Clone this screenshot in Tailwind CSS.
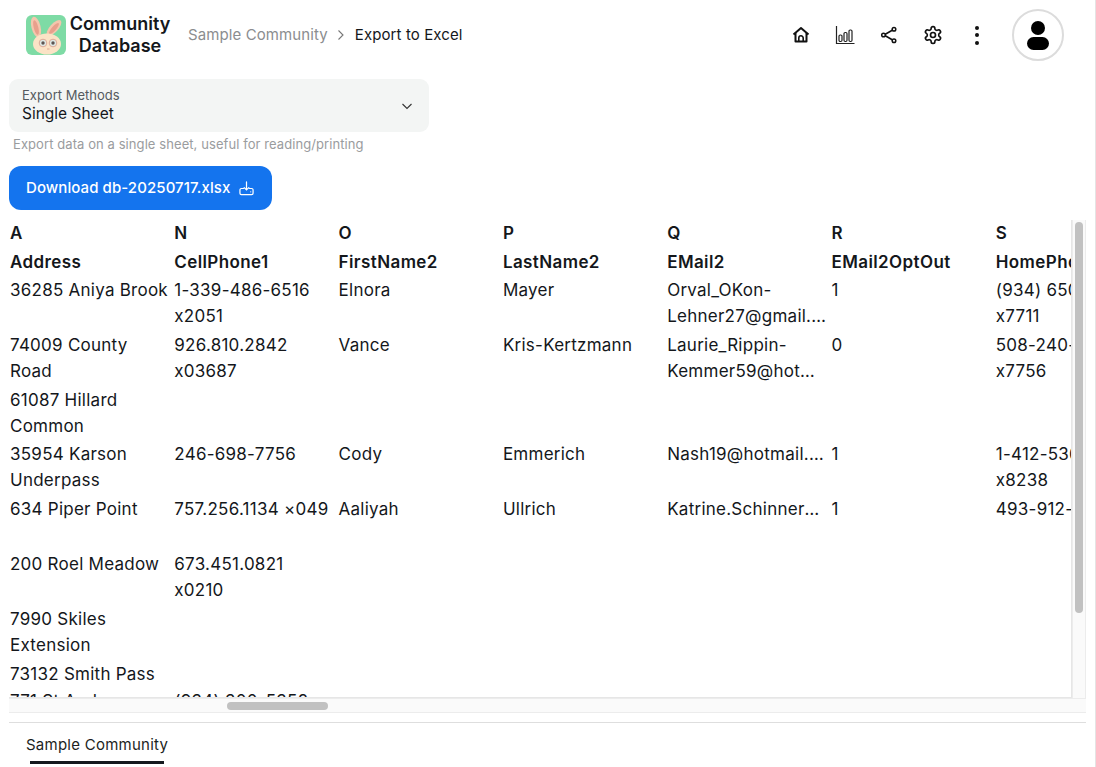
<!DOCTYPE html>
<html lang="en">
<head>
  <meta charset="UTF-8" />
  <meta name="viewport" content="width=device-width, initial-scale=1.0" />
  <title>Export to Excel</title>
  <script src="https://cdn.jsdelivr.net/npm/@tailwindcss/browser@4"></script>
</head>
<body class="h-[767px] w-[1096px] overflow-hidden bg-white text-[#14171b] font-[Inter,sans-serif]">
<div class="h-full flex flex-col border-r border-[#e4e4e4] pl-[9px] pr-[9px]">

  <!-- top bar -->
  <header class="h-[70px] shrink-0 flex items-center pl-[17px] pr-[22px]">
    <svg class="w-10 h-10 shrink-0" viewBox="0 0 40 40">
      <rect width="40" height="40" rx="6" fill="#7edba5"/>
      <ellipse cx="10" cy="12" rx="4.6" ry="10.5" transform="rotate(-14 10 12)" fill="#f3c6ad"/>
      <ellipse cx="10" cy="12.5" rx="2.3" ry="7.5" transform="rotate(-14 10 12.500)" fill="#e8a08c"/>
      <ellipse cx="28" cy="13" rx="4.2" ry="10" transform="rotate(42 28 13)" fill="#f3c6ad"/>
      <ellipse cx="28" cy="13.5" rx="2.1" ry="7" transform="rotate(42 28 13.500)" fill="#e8a08c"/>
      <ellipse cx="21" cy="29" rx="14" ry="10.500" fill="#fbe3c6"/>
      <circle cx="17" cy="28" r="3.800" fill="#dfe9e6" stroke="#d99a86" stroke-width="0.8"/>
      <circle cx="27" cy="28" r="3.800" fill="#dfe9e6" stroke="#d99a86" stroke-width="0.8"/>
      <circle cx="17" cy="28" r="1.700" fill="#5c5552"/>
      <circle cx="27" cy="28" r="1.700" fill="#5c5552"/>
      <path d="M21 34h2.500" stroke="#d99a86" stroke-width="0.8" fill="none"/>
    </svg>
    <div class="w-[108px] shrink-0 text-center text-[18px] leading-[22px] font-semibold">Community Database</div>
    <nav class="ml-[14px] flex items-center text-[15px] tracking-[0.1px]">
      <span class="text-[#8b8d8f]">Sample Community</span>
      <svg class="w-3 h-3 mx-[7.500px] text-[#777]" viewBox="0 0 12 12" fill="none" stroke="currentColor" stroke-width="1.100"><path d="M3.500 1.500 8 6l-4.500 4.500"/></svg>
      <span>Export to Excel</span>
    </nav>
    <div class="ml-auto flex items-center">
      <div class="w-[44px] flex justify-center">
        <svg class="w-5 h-5" viewBox="0 0 20 20" fill="none" stroke="#111" stroke-width="2" stroke-linejoin="round"><path d="M2.500 9.500 10 3l7.500 6.500"/><path d="M4.500 8v8.500h11V8"/><path d="M7.800 16.500V13a2.200 2.200 0 0 1 4.400 0v3.500" stroke-width="1.600"/></svg>
      </div>
      <div class="w-[44px] flex justify-center">
        <svg class="w-5 h-5" viewBox="0 0 20 20" fill="none" stroke="#222" stroke-width="1.200"><path d="M1.500 1v17.500h18"/><rect x="4" y="10" width="3" height="6.500" rx="1.200"/><rect x="9" y="7.500" width="3" height="9" rx="1.200"/><rect x="14" y="5" width="3" height="11.500" rx="1.200"/></svg>
      </div>
      <div class="w-[44px] flex justify-center">
        <svg class="w-5 h-5" viewBox="0 0 20 20" fill="none" stroke="#111" stroke-width="1.500"><path d="M5 10 14.500 4.500M5 10l9.500 5.500"/><circle cx="4.500" cy="10" r="1.800" fill="#fff"/><circle cx="15" cy="4.200" r="1.800" fill="#fff"/><circle cx="15" cy="15.800" r="1.800" fill="#fff"/></svg>
      </div>
      <div class="w-[44px] flex justify-center">
        <svg class="w-5 h-5" viewBox="0 0 24 24" fill="none" stroke="#111" stroke-width="2" stroke-linecap="round" stroke-linejoin="round"><path d="M12.220 2h-.440a2 2 0 0 0-2 2v.180a2 2 0 0 1-1 1.730l-.430.250a2 2 0 0 1-2 0l-.150-.080a2 2 0 0 0-2.730.730l-.220.380a2 2 0 0 0 .730 2.730l.150.100a2 2 0 0 1 1 1.720v.510a2 2 0 0 1-1 1.740l-.150.090a2 2 0 0 0-.730 2.730l.220.380a2 2 0 0 0 2.730.730l.150-.080a2 2 0 0 1 2 0l.430.250a2 2 0 0 1 1 1.730V20a2 2 0 0 0 2 2h.440a2 2 0 0 0 2-2v-.180a2 2 0 0 1 1-1.730l.430-.250a2 2 0 0 1 2 0l.150.080a2 2 0 0 0 2.730-.730l.220-.390a2 2 0 0 0-.730-2.730l-.150-.080a2 2 0 0 1-1-1.740v-.500a2 2 0 0 1 1-1.740l.150-.090a2 2 0 0 0 .730-2.730l-.220-.380a2 2 0 0 0-2.730-.730l-.150.080a2 2 0 0 1-2 0l-.430-.250a2 2 0 0 1-1-1.730V4a2 2 0 0 0-2-2z"/><circle cx="12" cy="12" r="3"/></svg>
      </div>
      <div class="w-[44px] flex flex-col items-center gap-[3.500px]">
        <span class="w-1 h-1 rounded-full bg-[#111]"></span>
        <span class="w-1 h-1 rounded-full bg-[#111]"></span>
        <span class="w-1 h-1 rounded-full bg-[#111]"></span>
      </div>
      <div class="ml-[13px] w-[52px] h-[52px] rounded-full border-2 border-[#dcdcdc] flex flex-col items-center justify-center gap-[2px]">
        <span class="w-[14px] h-[14px] rounded-full bg-black"></span>
        <span class="w-[22px] h-[13px] rounded-full bg-black"></span>
      </div>
    </div>
  </header>

  <!-- export form -->
  <div class="mt-[9px] w-[420px] h-[53px] shrink-0 rounded-[9px] bg-[#f3f5f4] flex items-center justify-between pl-[13px] pr-[16px]">
    <div class="-mt-[1px]">
      <div class="text-[13px] leading-[16px] text-[#555a5e]">Export Methods</div>
      <div class="mt-[1px] text-[15.500px] leading-[20px]">Single Sheet</div>
    </div>
    <svg class="w-3 h-3 text-[#333]" viewBox="0 0 12 12" fill="none" stroke="currentColor" stroke-width="1.100"><path d="M1.500 4 6 8.500 10.500 4"/></svg>
  </div>
  <p class="mt-[4px] ml-[4px] text-[13px] tracking-[0.08px] leading-[17px] text-[#9a9c9e] shrink-0">Export data on a single sheet, useful for reading/printing</p>
  <button class="mt-[13px] w-[263px] h-[44px] shrink-0 rounded-[12px] bg-[#1474ee] text-white text-[15px] tracking-[0.08px] font-medium flex items-center pl-[17px] gap-[9px]">
    Download db-20250717.xlsx
    <svg class="w-[15px] h-[15px]" viewBox="0 0 16 16" fill="none" stroke="currentColor" stroke-width="1.300" stroke-linecap="round" stroke-linejoin="round"><path d="M8 1v8.500M5.500 7 8 9.500 10.500 7"/><path d="M5 8H2.500a1.500 1.500 0 0 0-1.500 1.500v3.500A1.500 1.500 0 0 0 2.500 14.500h11a1.500 1.500 0 0 0 1.500-1.500V9.500A1.500 1.500 0 0 0 13.500 8H11"/><path d="M12.500 11.500h.01"/></svg>
  </button>

  <!-- sheet preview -->
  <div class="mt-[10px] h-[493px] shrink-0 relative overflow-hidden">
    <div class="h-[478px] w-[1063px] overflow-hidden border-r border-b border-[#e6e6e6] text-[17px] leading-[26px] tracking-[0.25px]">
      <div class="grid grid-cols-[repeat(7,164.300px)] grid-rows-[28.800px_28.300px] auto-rows-[27.400px] w-[1150px] pl-[1px]">
        <div class="font-semibold">A</div><div class="font-semibold">N</div><div class="font-semibold">O</div><div class="font-semibold">P</div><div class="font-semibold">Q</div><div class="font-semibold">R</div><div class="font-semibold">S</div>
        <div class="font-semibold tracking-[0.4px]">Address</div><div class="font-semibold tracking-[0.4px]">CellPhone1</div><div class="font-semibold tracking-[0.4px]">FirstName2</div><div class="font-semibold tracking-[0.4px]">LastName2</div><div class="font-semibold tracking-[0.4px]">EMail2</div><div class="font-semibold tracking-[0.4px]">EMail2OptOut</div><div class="font-semibold tracking-[0.4px]">HomePhone2</div>

        <div class="row-span-2 pr-1">36285 Aniya Brook</div><div class="row-span-2 pr-1">1-339-486-6516 x2051</div><div class="row-span-2">Elnora</div><div class="row-span-2">Mayer</div><div class="row-span-2 pr-1 line-clamp-2 break-words">Orval_OKon-Lehner27@gmail.com</div><div class="row-span-2">1</div><div class="row-span-2 pr-1">(934) 650-1184 x7711</div>
        <div class="row-span-2 pr-1">74009 County Road</div><div class="row-span-2 pr-1">926.810.2842 x03687</div><div class="row-span-2">Vance</div><div class="row-span-2">Kris-Kertzmann</div><div class="row-span-2 pr-1 line-clamp-2 break-words">Laurie_Rippin-Kemmer59@hotmail.com</div><div class="row-span-2">0</div><div class="row-span-2 pr-1">508-240-1177 x7756</div>
        <div class="row-span-2 pr-1">61087 Hillard Common</div><div class="row-span-2"></div><div class="row-span-2"></div><div class="row-span-2"></div><div class="row-span-2"></div><div class="row-span-2"></div><div class="row-span-2"></div>
        <div class="row-span-2 pr-1">35954 Karson Underpass</div><div class="row-span-2 pr-1">246-698-7756</div><div class="row-span-2">Cody</div><div class="row-span-2">Emmerich</div><div class="row-span-2 pr-1 truncate">Nash19@hotmail.com</div><div class="row-span-2">1</div><div class="row-span-2 pr-1">1-412-536-0142 x8238</div>
        <div class="row-span-2 pr-1">634 Piper Point</div><div class="row-span-2 whitespace-nowrap">757.256.1134 ×049</div><div class="row-span-2">Aaliyah</div><div class="row-span-2">Ullrich</div><div class="row-span-2 pr-1 truncate">Katrine.Schinner@gmail.com</div><div class="row-span-2">1</div><div class="row-span-2 pr-1">493-912-4476</div>
        <div class="row-span-2 pr-1">200 Roel Meadow</div><div class="row-span-2 pr-1">673.451.0821 x0210</div><div class="row-span-2"></div><div class="row-span-2"></div><div class="row-span-2"></div><div class="row-span-2"></div><div class="row-span-2"></div>
        <div class="row-span-2 pr-1">7990 Skiles Extension</div><div class="row-span-2"></div><div class="row-span-2"></div><div class="row-span-2"></div><div class="row-span-2"></div><div class="row-span-2"></div><div class="row-span-2"></div>
        <div class="pr-1">73132 Smith Pass</div><div></div><div></div><div></div><div></div><div></div><div></div>
        <div class="pr-1">771 St Andrew Lane</div><div class="pr-1">(934) 300-5352</div>
      </div>
    </div>
    <!-- scrollbars -->
    <div class="absolute right-0 top-0 bottom-0 w-[14px] bg-[#fafafa] border-l border-r border-[#ececec]">
      <div class="mx-auto mt-[2px] w-2 h-[391px] rounded-full bg-[#c1c1c1]"></div>
    </div>
    <div class="absolute left-0 right-0 bottom-0 h-[15px] bg-[#fafafa] border-t border-b border-[#ececec]">
      <div class="ml-[218px] mt-[3px] w-[101px] h-2 rounded-full bg-[#c1c1c1]"></div>
    </div>
  </div>

  <!-- sheet tabs -->
  <div class="mt-[9px] border-t border-[#dedede] grow">
    <div class="inline-block ml-[17px] pt-[12px] text-[15px] tracking-[0.25px] leading-[20px] text-[#1c1f22]">
      Sample Community
      <div class="mt-[6px] mx-[4px] h-[3px] bg-[#14191e]"></div>
    </div>
  </div>
</div>
</body>
</html>
